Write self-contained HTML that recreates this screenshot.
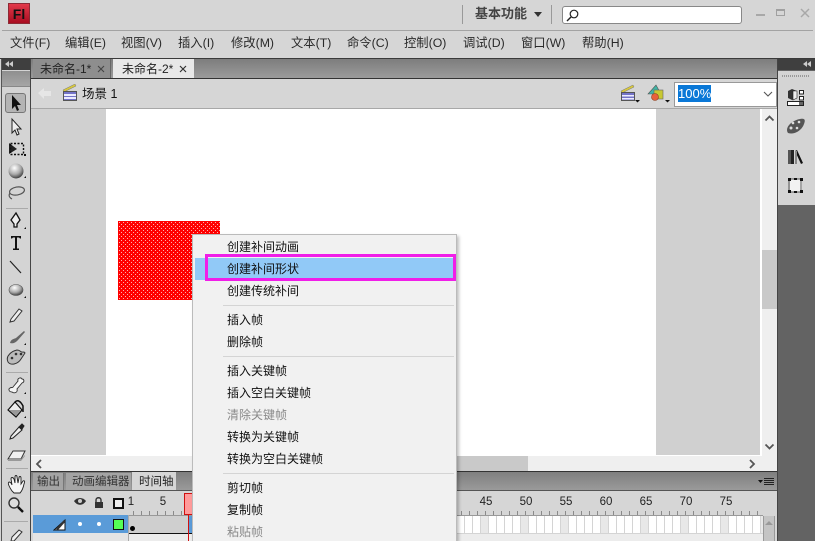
<!DOCTYPE html>
<html><head><meta charset="utf-8">
<style>
html,body{margin:0;padding:0;width:815px;height:541px;overflow:hidden;background:#d6d6d6}
body{position:relative;font-family:"Liberation Sans","Noto Sans CJK SC",sans-serif;font-size:12px;color:#222}
.a{position:absolute}
.t{position:absolute;white-space:nowrap;line-height:16px}
.m{position:absolute;top:35px;font-size:12.3px;line-height:16px;color:#2a2a2a;white-space:nowrap}
.i{position:absolute;left:227px;line-height:16px;color:#111;white-space:nowrap}
.d{color:#8a8a8a}
.s{position:absolute;left:223px;width:231px;height:1px;background:#d4d4d4}
.n{position:absolute;top:495px;font-size:11.5px;line-height:14px;color:#222;width:20px;text-align:center}
</style></head><body>
<!-- title -->
<div class="a" style="left:8px;top:3px;width:22px;height:21px;background:linear-gradient(#e23a4a,#a80c20);border:1px solid #8c2b35;box-sizing:border-box;color:#111;font-weight:bold;font-size:14px;line-height:20px;text-align:center">Fl</div>
<div class="a" style="left:2px;top:30px;width:811px;height:1px;background:#a3a3a3"></div>
<div class="a" style="left:462px;top:5px;width:1px;height:19px;background:#999"></div>
<div class="a" style="left:551px;top:5px;width:1px;height:19px;background:#999"></div>
<div class="t" style="left:475px;top:6px;font-size:13px;font-weight:bold;color:#444">基本功能</div>
<svg class="a" style="left:534px;top:12px" width="9" height="6"><path d="M0 0h8L4 5z" fill="#333"/></svg>
<div class="a" style="left:562px;top:6px;width:180px;height:18px;box-sizing:border-box;background:#fff;border:1px solid #888;border-radius:3px"></div>
<svg class="a" style="left:565px;top:9px" width="16" height="14"><circle cx="9" cy="5" r="3.800" fill="none" stroke="#222" stroke-width="1.200"/><path d="M6 8L2 12" stroke="#222" stroke-width="1.400"/></svg>
<div class="a" style="left:756px;top:14px;width:9px;height:2px;background:#a8a8a8"></div>
<div class="a" style="left:776px;top:9px;width:9px;height:7px;box-sizing:border-box;border:1px solid #a0a0a0;border-top-width:2px"></div>
<svg class="a" style="left:800px;top:8px" width="11" height="10"><path d="M1 1l8 8M9 1l-8 8" stroke="#a8a8a8" stroke-width="1.500"/></svg>
<!-- menu -->
<div class="m" style="left:10px">文件(F)</div>
<div class="m" style="left:65px">编辑(E)</div>
<div class="m" style="left:121px">视图(V)</div>
<div class="m" style="left:178px">插入(I)</div>
<div class="m" style="left:231px">修改(M)</div>
<div class="m" style="left:291px">文本(T)</div>
<div class="m" style="left:347px">命令(C)</div>
<div class="m" style="left:404px">控制(O)</div>
<div class="m" style="left:463px">调试(D)</div>
<div class="m" style="left:521px">窗口(W)</div>
<div class="m" style="left:582px">帮助(H)</div>
<!-- frame -->
<div class="a" style="left:0;top:58px;width:815px;height:1px;background:#3a3a3a"></div>
<!-- left toolbar -->
<div class="a" style="left:0;top:59px;width:31px;height:482px;background:#d4d4d4;border-right:1px solid #444;box-sizing:border-box"></div>
<div class="a" style="left:2px;top:59px;width:28px;height:11px;background:#3f3f3f"></div>
<svg class="a" style="left:5px;top:61px" width="9" height="7"><path d="M4 0v6L0 3zM8 0v6L4 3z" fill="#ccc"/></svg>
<div class="a" style="left:2px;top:71px;width:28px;height:15px;background:linear-gradient(#8f8f8f,#a6a6a6);border-bottom:1px solid #888"></div>
<div class="a" style="left:1px;top:59px;width:1px;height:482px;background:#555"></div>
<div class="a" style="left:5px;top:93px;width:21px;height:20px;box-sizing:border-box;background:#b4b4b4;border:1px solid #777;border-radius:3px"></div>
<svg class="a" style="left:0;top:85px" width="31" height="456" viewBox="0 85 31 456">
<defs><radialGradient id="g" cx=".4" cy=".3" r=".7"><stop offset="0" stop-color="#fff"/><stop offset=".6" stop-color="#aaa"/><stop offset="1" stop-color="#444"/></radialGradient></defs>
<path d="M12 95v14l3-3 2 5 2-1-2-5h4z" fill="#111"/>
<path d="M12 119v14l3-3 2 5 2-1-2-5h4z" fill="#eee" stroke="#222"/>
<path d="M9 143l8 6-8 5z" fill="#222"/><rect x="10.500" y="143.500" width="13" height="11" fill="none" stroke="#111" stroke-dasharray="2 1.500" stroke-width="1.400"/><rect x="24" y="154" width="2" height="2" fill="#111"/>
<circle cx="16" cy="171" r="7.500" fill="url(#g)"/><path d="M24 178h2v-2z" fill="#111"/>
<ellipse cx="17" cy="191" rx="7.500" ry="4" fill="none" stroke="#555" stroke-width="1.200" transform="rotate(-10 17 191)"/><path d="M10 193c-2 3 0 5 2 6" fill="none" stroke="#555" stroke-width="1.200"/>
<rect x="6" y="208" width="22" height="1" fill="#aaa"/>
<path d="M16 213l4 7-3 4v3h-3v-3l-3-4z" fill="#eee" stroke="#111" stroke-width="1.300"/><path d="M24 229h2v-2z" fill="#111"/>
<path d="M11 236h10v2.500h-1l-1-1h-2v11H19v1.500h-6v-1.500h2v-11h-2l-1 1h-1z" fill="#111"/>
<path d="M10 261l11 12" stroke="#222" stroke-width="1.200"/>
<ellipse cx="16" cy="290" rx="7" ry="5.500" fill="url(#g)" stroke="#555" stroke-width=".600"/><path d="M24 298h2v-2z" fill="#111"/>
<path d="M11 319l8-10 3 2-8 10-4 1z" fill="#eee" stroke="#333"/>
<path d="M10 343c1-4 4-4 6-5l8-7 1 1-7 8c-2 2-4 4-8 3z" fill="#666"/><path d="M24 345h2v-2z" fill="#111"/>
<path d="M8 362c-3-6 4-11 9-12 4 0 3 3 7 2l1 1-4 6c-3 5-10 7-13 3z" fill="#bbb" stroke="#333"/><circle cx="12" cy="358" r="1.300" fill="#333"/><circle cx="16" cy="354" r="1.300" fill="#333"/><circle cx="21" cy="354" r="1.300" fill="#333"/>
<rect x="6" y="372" width="22" height="1" fill="#aaa"/>
<path d="M12 392c-3 0-4-3-2-4 1-1 3 0 3-1l5-6c-1-3 3-4 4-2 2 0 3 3 0 4l-5 6c1 3-2 5-5 3z" fill="#f4f4f4" stroke="#333" stroke-width=".900"/><path d="M24 394h2v-2z" fill="#111"/>
<path d="M8 410l7-8 7 8-6 7z" fill="#eee" stroke="#111" stroke-width="1.200"/><path d="M15 402c3-3 6 0 8 4v6" fill="none" stroke="#111" stroke-width="1.500"/><path d="M9 410l12 0-5 6z" fill="#999"/><path d="M24 418h2v-2z" fill="#111"/>
<path d="M11 436l8-9 3 3-9 8-3 1z" fill="#eee" stroke="#222"/><path d="M19 427l3-3 2 2-2 3z" fill="#222" stroke="#222"/>
<path d="M8 459l5-8h12l-4 8z" fill="#f0f0f0" stroke="#333"/><path d="M8 459h13l4-4v1l-4 5H8z" fill="#999"/>
<rect x="6" y="468" width="22" height="1" fill="#aaa"/>
<path d="M12 491c-2-3-5-8-3-9 2 0 3 3 3 3l-1-6c0-2 2-2 3 0l1 4v-6c0-2 2-2 2 0l1 6 1-5c0-2 2-2 2 0l0 6 2-3c2-1 2 1 1 3-1 5-2 7-4 9h-6z" fill="#f5f5f5" stroke="#222" stroke-width=".900"/>
<circle cx="14" cy="503" r="5" fill="#ddd" stroke="#333" stroke-width="1.400"/><path d="M18 507l5 5" stroke="#111" stroke-width="2.400"/>
<rect x="4" y="521" width="24" height="1" fill="#aaa"/>
<path d="M12 537l7-7 3 2-8 9h-3z" fill="#eee" stroke="#333"/>
</svg>
<!-- right panel -->
<div class="a" style="left:777px;top:59px;width:38px;height:482px;background:#636363;border-left:1px solid #444;box-sizing:border-box"></div>
<div class="a" style="left:778px;top:59px;width:37px;height:11px;background:#3f3f3f"></div>
<svg class="a" style="left:803px;top:61px" width="9" height="7"><path d="M4 0v6L0 3zM8 0v6L4 3z" fill="#ccc"/></svg>
<div class="a" style="left:778px;top:71px;width:37px;height:134px;background:#d4d4d4"></div>
<div class="a" style="left:782px;top:75px;width:28px;height:2px;background-image:repeating-linear-gradient(90deg,#999 0 1px,transparent 1px 2px)"></div>
<svg class="a" style="left:778px;top:85px" width="37" height="112" viewBox="778 85 37 112">
<path d="M788 91l4-2 5 2v7l-5 2-4-2z" fill="#333"/><path d="M793 91l4 0v7l-4 2z" fill="#eee" stroke="#222" stroke-width=".600"/>
<rect x="799.500" y="90.500" width="4" height="3.500" fill="#fff" stroke="#222"/><rect x="799.500" y="96.500" width="4" height="3.500" fill="#fff" stroke="#222"/>
<rect x="787.500" y="101.500" width="16" height="4" fill="#fff" stroke="#222"/><rect x="799" y="102" width="4" height="3" fill="#666"/>
<path d="M788 133c-4-6 5-13 12-14 6-1 5 2 4 5-2 6-9 11-16 9z" fill="#555"/><circle cx="793" cy="123" r="1.300" fill="#ddd"/><circle cx="799" cy="122" r="1.300" fill="#ddd"/><circle cx="791" cy="128" r="1.500" fill="#ddd"/><circle cx="797" cy="128" r="1.300" fill="#ddd"/>
<rect x="788" y="150" width="3" height="14" fill="#555"/><rect x="791" y="150" width="3" height="14" fill="#222"/><path d="M797 150l6 13-2 1-6-13z" fill="#111"/><rect x="795" y="151" width="2" height="13" fill="#888"/>
<rect x="790" y="179" width="12" height="13" fill="#f2f2f2"/><rect x="789" y="179" width="12" height="13" fill="none" stroke="#555"/>
<g fill="#111"><rect x="788" y="178" width="3" height="3"/><rect x="800" y="178" width="3" height="3"/><rect x="788" y="190" width="3" height="3"/><rect x="800" y="190" width="3" height="3"/><rect x="794" y="178" width="3" height="2"/><rect x="794" y="191" width="3" height="2"/></g>
</svg>
<!-- tabs -->
<div class="a" style="left:31px;top:59px;width:746px;height:19px;background:linear-gradient(#7d7d7d,#9b9b9b)"></div>
<div class="a" style="left:31px;top:78px;width:746px;height:1px;background:#333"></div>
<div class="a" style="left:33px;top:59px;width:78px;height:19px;background:#8e8e8e;border-right:1px solid #666;box-sizing:border-box"></div>
<div class="t" style="left:40px;top:61px;color:#222">未命名-1*</div>
<svg class="a" style="left:97px;top:65px" width="8" height="8"><path d="M1 1l6 6M7 1l-6 6" stroke="#444" stroke-width="1.100"/></svg>
<div class="a" style="left:113px;top:59px;width:81px;height:19px;background:#e8e8e8"></div>
<div class="t" style="left:122px;top:61px;color:#222">未命名-2*</div>
<svg class="a" style="left:179px;top:65px" width="8" height="8"><path d="M1 1l6 6M7 1l-6 6" stroke="#333" stroke-width="1.200"/></svg>
<!-- doc bar -->
<div class="a" style="left:31px;top:79px;width:746px;height:29px;background:#d6d6d6"></div>
<div class="a" style="left:31px;top:108px;width:746px;height:1px;background:#a8a8a8"></div>
<svg class="a" style="left:38px;top:87px" width="15" height="13"><path d="M0 6l6-5v3h7v5H6v3z" fill="#e6e6e6"/></svg>
<svg class="a" style="left:62px;top:84px" width="17" height="18"><path d="M1 6L13 0l1 2-12 6z" fill="#d8c83c" stroke="#777" stroke-width=".500"/><rect x="1.500" y="7.500" width="13" height="9" fill="#7474c8" stroke="#555"/><rect x="2" y="10" width="12" height="2" fill="#ececff"/><rect x="2" y="13" width="12" height="2" fill="#ececff"/></svg>
<div class="t" style="left:82px;top:86px;color:#111;font-size:12.500px">场景 1</div>
<svg class="a" style="left:620px;top:84px" width="22" height="20"><path d="M1 7L13 1l1 2-12 6z" fill="#d8c83c" stroke="#777" stroke-width=".500"/><rect x="1.500" y="8.500" width="13" height="8" fill="#7474c8" stroke="#555"/><rect x="2" y="11" width="12" height="1.500" fill="#ececff"/><rect x="2" y="14" width="12" height="1.500" fill="#ececff"/><path d="M15 16h5l-2.500 2.500z" fill="#111"/></svg>
<svg class="a" style="left:647px;top:84px" width="24" height="20"><path d="M1 10L9 1l5 9z" fill="#3fb5a5" stroke="#555" stroke-width=".600"/><rect x="7" y="6" width="9" height="9" fill="#c8c832" stroke="#666" stroke-width=".600"/><circle cx="8" cy="13" r="3.500" fill="#e8603c" stroke="#8a4020" stroke-width=".600"/><path d="M18 16h5l-2.500 2.500z" fill="#111"/></svg>
<div class="a" style="left:674px;top:82px;width:103px;height:25px;box-sizing:border-box;background:#fff;border:1px solid #999"></div>
<div class="a" style="left:678px;top:85px;width:33px;height:17px;background:#0a78d7;color:#fff;font-size:13px;line-height:17px">100%</div>
<svg class="a" style="left:763px;top:91px" width="10" height="7"><path d="M1 1l4 4 4-4" fill="none" stroke="#555" stroke-width="1.100"/></svg>
<!-- stage -->
<div class="a" style="left:31px;top:109px;width:729px;height:346px;background:#d0d0d0"></div>
<div class="a" style="left:106px;top:109px;width:550px;height:346px;background:#fff"></div>
<div class="a" style="left:760px;top:109px;width:2px;height:347px;background:#fff"></div>
<div class="a" style="left:31px;top:455px;width:731px;height:1px;background:#fff"></div>
<div class="a" style="left:762px;top:109px;width:15px;height:362px;background:#efefef"></div>
<div class="a" style="left:762px;top:250px;width:15px;height:59px;background:#c9c9c9"></div>
<svg class="a" style="left:764px;top:114px" width="11" height="8"><path d="M1.500 6.500L5.500 2.500l4 4" fill="none" stroke="#555" stroke-width="1.800"/></svg>
<svg class="a" style="left:764px;top:443px" width="11" height="8"><path d="M1.500 1.500l4 4 4-4" fill="none" stroke="#555" stroke-width="1.800"/></svg>
<div class="a" style="left:31px;top:456px;width:731px;height:15px;background:#efefef"></div>
<div class="a" style="left:200px;top:456px;width:328px;height:15px;background:#c9c9c9"></div>
<svg class="a" style="left:35px;top:459px" width="8" height="10"><path d="M6 1L2 5l4 4" fill="none" stroke="#555" stroke-width="1.800"/></svg>
<svg class="a" style="left:748px;top:459px" width="8" height="10"><path d="M2 1l4 4-4 4" fill="none" stroke="#555" stroke-width="1.800"/></svg>
<!-- red shape -->
<svg class="a" style="left:118px;top:221px" width="102" height="79"><defs><pattern id="p" width="4" height="4" patternUnits="userSpaceOnUse"><rect width="4" height="4" fill="#ff0000"/><rect x="1" y="1" width="1" height="1" fill="#ffb0b0"/><rect x="3" y="3" width="1" height="1" fill="#ffb0b0"/></pattern></defs><rect width="102" height="79" fill="url(#p)"/></svg>
<!-- timeline -->
<div class="a" style="left:31px;top:471px;width:746px;height:1px;background:#333"></div>
<div class="a" style="left:31px;top:472px;width:746px;height:18px;background:linear-gradient(#7f7f7f,#9a9a9a)"></div>
<div class="a" style="left:33px;top:473px;width:31px;height:17px;background:#a4a4a4;border-right:1px solid #777;box-sizing:border-box"></div>
<div class="t" style="left:37px;top:474px;color:#333;font-size:11.500px">输出</div>
<div class="a" style="left:66px;top:473px;width:65px;height:17px;background:#a4a4a4"></div>
<div class="t" style="left:72px;top:474px;color:#333;font-size:11.500px">动画编辑器</div>
<div class="a" style="left:132px;top:472px;width:44px;height:18px;background:#d6d6d6"></div>
<div class="t" style="left:139px;top:474px;color:#222;font-size:11.500px">时间轴</div>
<svg class="a" style="left:758px;top:477px" width="17" height="10"><path d="M0 3h5L2.500 6z" fill="#111"/><path d="M6 1.500h10M6 3.500h10M6 5.500h10M6 7.500h10" stroke="#222"/></svg>
<div class="a" style="left:31px;top:490px;width:746px;height:1px;background:#555"></div>
<div class="a" style="left:31px;top:491px;width:746px;height:24px;background:#d6d6d6"></div>
<svg class="a" style="left:73px;top:497px" width="14" height="10"><path d="M1 4c3-4 9-4 12 0-3 5-9 5-12 0z" fill="#333"/><circle cx="7" cy="4" r="2" fill="#ccc"/></svg>
<svg class="a" style="left:92px;top:497px" width="14" height="12"><path d="M4 5V3c0-3 5-3 5 0v2" fill="none" stroke="#333" stroke-width="1.400"/><rect x="3" y="5" width="8" height="6" fill="#333"/></svg>
<div class="a" style="left:113px;top:498px;width:11px;height:11px;box-sizing:border-box;border:2px solid #111;background:#eee"></div>
<div class="n" style="left:121px;width:20px">1</div>
<div class="n" style="left:153px">5</div>
<div class="n" style="left:476px">45</div>
<div class="n" style="left:516px">50</div>
<div class="n" style="left:556px">55</div>
<div class="n" style="left:596px">60</div>
<div class="n" style="left:636px">65</div>
<div class="n" style="left:676px">70</div>
<div class="n" style="left:716px">75</div>
<div class="a" style="left:133px;top:511px;width:630px;height:4px;background-image:repeating-linear-gradient(90deg,#8a8a8a 0 1px,transparent 1px 8px)"></div>
<!-- frames -->
<div class="a" style="left:33px;top:515px;width:96px;height:18px;background:#5a9bd8"></div>
<div class="a" style="left:33px;top:533px;width:96px;height:8px;background:#e4e4e4"></div>
<div class="a" style="left:129px;top:515px;width:634px;height:1px;background:#999"></div>
<div class="a" style="left:129px;top:516px;width:634px;height:17px;background-color:#fff;background-image:repeating-linear-gradient(90deg,#fff 0 7px,#d4d4d4 7px 8px)"></div>
<div class="a" style="left:481px;top:516px;width:282px;height:17px;background-image:repeating-linear-gradient(90deg,#e8e8e8 0 7px,transparent 7px 40px)"></div>
<div class="a" style="left:129px;top:516px;width:59px;height:17px;background:#cfcfcf"></div>
<div class="a" style="left:129px;top:533px;width:634px;height:1px;background:#111"></div>
<div class="a" style="left:457px;top:533px;width:306px;height:1px;background:#d4d4d4"></div>
<div class="a" style="left:129px;top:534px;width:634px;height:7px;background:#ececec"></div>
<div class="a" style="left:128px;top:515px;width:1px;height:26px;background:#aaa"></div>
<div class="a" style="left:130px;top:526px;width:5px;height:5px;border-radius:50%;background:#000"></div>
<div class="a" style="left:188px;top:516px;width:4px;height:17px;background:#5a9bd8"></div>
<div class="a" style="left:184px;top:493px;width:9px;height:22px;box-sizing:border-box;background:#ff9a9a;border:1px solid #d01010"></div>
<div class="a" style="left:188px;top:515px;width:1px;height:26px;background:#d01010"></div>
<svg class="a" style="left:53px;top:518px" width="14" height="13"><path d="M1 12h11V2z" fill="#fff" stroke="#111"/><path d="M3 11l8-9 2 1-8 9z" fill="#333"/></svg>
<div class="a" style="left:78px;top:522px;width:4px;height:4px;border-radius:50%;background:#fff"></div>
<div class="a" style="left:97px;top:522px;width:4px;height:4px;border-radius:50%;background:#fff"></div>
<div class="a" style="left:113px;top:519px;width:11px;height:11px;box-sizing:border-box;border:1px solid #111;background:#55ff55"></div>
<div class="a" style="left:763px;top:516px;width:12px;height:25px;background:#c4c4c4;border-left:1px solid #999;border-right:1px solid #999;box-sizing:border-box"></div>
<svg class="a" style="left:764px;top:520px" width="10" height="6"><path d="M1 5l4-4 4 4z" fill="#999"/></svg>
<!-- context menu -->
<div class="a" style="left:192px;top:234px;width:265px;height:307px;background:#f1f1f1;border:1px solid #bbb;border-bottom:none;box-sizing:border-box;box-shadow:2px 2px 3px rgba(0,0,0,.25)"></div>
<div class="a" style="left:195px;top:258px;width:260px;height:22px;background:#91c9f7"></div>
<div class="a" style="left:205px;top:254px;width:251px;height:27px;box-sizing:border-box;border:3px solid #f01ee8"></div>
<div class="i" style="top:239px">创建补间动画</div>
<div class="i" style="top:261px">创建补间形状</div>
<div class="i" style="top:283px">创建传统补间</div>
<div class="s" style="top:305px"></div>
<div class="i" style="top:312px">插入帧</div>
<div class="i" style="top:334px">删除帧</div>
<div class="s" style="top:356px"></div>
<div class="i" style="top:363px">插入关键帧</div>
<div class="i" style="top:385px">插入空白关键帧</div>
<div class="i d" style="top:407px">清除关键帧</div>
<div class="i" style="top:429px">转换为关键帧</div>
<div class="i" style="top:451px">转换为空白关键帧</div>
<div class="s" style="top:473px"></div>
<div class="i" style="top:480px">剪切帧</div>
<div class="i" style="top:502px">复制帧</div>
<div class="i d" style="top:524px">粘贴帧</div>
</body></html>
